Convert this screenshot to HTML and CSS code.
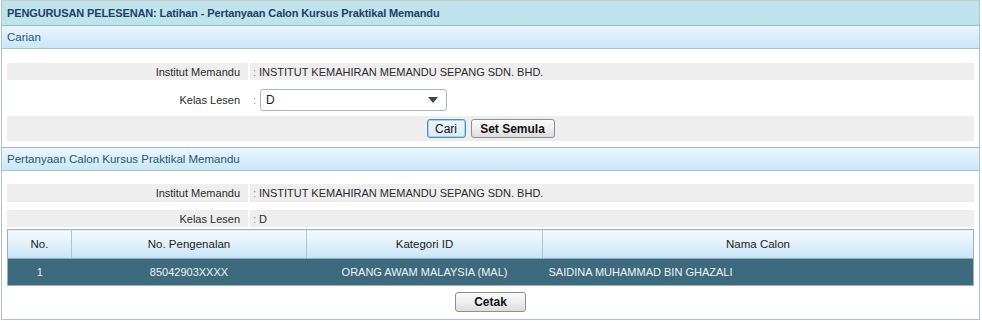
FILE: index.html
```html
<!DOCTYPE html>
<html>
<head>
<meta charset="utf-8">
<title>Pertanyaan Calon Kursus Praktikal Memandu</title>
<link rel="stylesheet" href="styles.css">
</head>
<body>
<div class="panel">
  <div class="title-bar">PENGURUSAN PELESENAN: Latihan - Pertanyaan Calon Kursus Praktikal Memandu</div>

  <div class="sec-head sec-first">Carian</div>
  <div class="sec-body body-search">
    <div class="frow frow-grey r1">
      <div class="flabel">Institut Memandu</div>
      <div class="fval"><span class="colon">:</span>INSTITUT KEMAHIRAN MEMANDU SEPANG SDN. BHD.</div>
    </div>
    <div class="frow r-select">
      <div class="flabel">Kelas Lesen</div>
      <div class="fval"><span class="colon">:</span>
        <div class="select"><span>D</span><span class="arrow"></span></div>
      </div>
    </div>
    <div class="btn-row">
      <button class="btn btn-focus">Cari</button>
      <button class="btn btn-bold">Set Semula</button>
    </div>
  </div>

  <div class="sec-head">Pertanyaan Calon Kursus Praktikal Memandu</div>
  <div class="sec-body body-result">
    <div class="frow frow-grey r2a">
      <div class="flabel">Institut Memandu</div>
      <div class="fval"><span class="colon">:</span>INSTITUT KEMAHIRAN MEMANDU SEPANG SDN. BHD.</div>
    </div>
    <div class="frow frow-grey r2b">
      <div class="flabel">Kelas Lesen</div>
      <div class="fval"><span class="colon">:</span>D</div>
    </div>
    <table class="grid">
      <thead>
        <tr>
          <th class="c-no">No.</th>
          <th class="c-ic">No. Pengenalan</th>
          <th class="c-cat">Kategori ID</th>
          <th class="c-name">Nama Calon</th>
        </tr>
      </thead>
      <tbody>
        <tr>
          <td class="center">1</td>
          <td class="center">85042903XXXX</td>
          <td class="center">ORANG AWAM MALAYSIA (MAL)</td>
          <td class="left">SAIDINA MUHAMMAD BIN GHAZALI</td>
        </tr>
      </tbody>
    </table>
    <div class="print-row">
      <button class="btn btn-bold btn-print">Cetak</button>
    </div>
  </div>
</div>
</body>
</html>
```

FILE: styles.css
```css
html, body {
  margin: 0;
  padding: 0;
  background: #ffffff;
}

body {
  font-family: "Liberation Sans", Arial, sans-serif;
  font-size: 11px;
  color: #333333;
}

.panel {
  margin-left: 1px;
  width: 979px;
  box-sizing: border-box;
  border: 1px solid #aac4d2;
  border-top-color: #c8c8c8;
  height: 320px;
}

.title-bar {
  height: 24px;
  line-height: 25px;
  background: #bee3ea;
  border-bottom: 1px solid #8ebfcc;
  padding-left: 5px;
  font-weight: bold;
  font-size: 11px;
  letter-spacing: -0.12px;
  color: #1d3f6a;
}

.sec-head {
  height: 22px;
  line-height: 22px;
  padding-left: 5px;
  font-size: 11.5px;
  color: #2a5673;
  background: linear-gradient(to bottom, #eaf6fd 0%, #c9e6f8 100%);
  border-top: 1px solid #9fbccf;
  border-bottom: 1px solid #a6c3d4;
}

.sec-first {
  border-top: none;
}

.sec-body {
  padding: 0 5px;
}

.body-search {
  padding-top: 14px;
  padding-bottom: 6px;
}

.body-result {
  padding-top: 13px;
}

.frow {
  display: grid;
  grid-template-columns: 241px 1fr;
  column-gap: 2px;
}

.frow-grey .flabel,
.frow-grey .fval {
  background: #eeeeee;
}

.flabel {
  text-align: right;
  padding-right: 8px;
  display: flex;
  align-items: center;
  justify-content: flex-end;
  color: #2b2b2b;
}

.fval {
  display: flex;
  align-items: center;
  padding-left: 3px;
  color: #2b2b2b;
}

.colon {
  color: #888888;
  margin-right: 3px;
  width: 3px;
}

.r1 { height: 17px; }
.r-select { height: 24px; margin-top: 8px; }
.r2a { height: 18px; }
.r2b { height: 17px; margin-top: 8px; }

.select {
  margin-left: 1px;
  width: 187px;
  height: 22px;
  box-sizing: border-box;
  border: 1px solid #a6b8c6;
  border-radius: 3px;
  background: #ffffff;
  display: flex;
  align-items: center;
  justify-content: space-between;
  padding: 0 8px 0 5px;
  font-size: 12px;
  color: #222222;
}

.arrow {
  width: 0;
  height: 0;
  border-left: 5px solid transparent;
  border-right: 5px solid transparent;
  border-top: 6px solid #444444;
}

.btn-row {
  margin-top: 4px;
  height: 25px;
  background: #eeeeee;
  display: flex;
  justify-content: center;
  align-items: center;
  gap: 5px;
}

.btn {
  font-family: "Liberation Sans", Arial, sans-serif;
  font-size: 12px;
  height: 19px;
  padding: 0;
  border: 1px solid #8e8e8e;
  border-radius: 3px;
  background: linear-gradient(to bottom, #fafafa 0%, #eeeeee 50%, #dcdcdc 100%);
  color: #111111;
  cursor: pointer;
}

.btn-focus {
  width: 39px;
  border-color: #4f8fb8;
  background: linear-gradient(to bottom, #eef6fb 0%, #dbeaf3 100%);
  box-shadow: inset 0 0 0 1px #a9d2ea;
}

.btn-bold {
  font-weight: bold;
  width: 84px;
}

.btn-print {
  width: 71px;
  height: 20px;
}

.grid {
  margin-top: 2px;
  width: 100%;
  border-collapse: collapse;
  border: 1px solid #96b4c5;
  table-layout: fixed;
}

.grid th {
  height: 28px;
  font-weight: normal;
  font-size: 11.5px;
  color: #222222;
  background: linear-gradient(to bottom, #f4fafe 0%, #e2f1fb 45%, #c7e4f6 100%);
  border-left: 1px solid #a9c6d6;
  border-bottom: 1px solid #8fb0c2;
  text-align: center;
  padding: 0;
}

.grid th:first-child { border-left: none; }

.c-no { width: 63px; }
.c-ic { width: 234px; }
.c-cat { width: 235px; }

.grid td {
  height: 26px;
  background: #3e6a7e;
  color: #eef3f6;
  font-size: 11px;
  padding: 0;
}

.grid td.center { text-align: center; }
.grid td.left { text-align: left; padding-left: 6px; }

.print-row {
  margin-top: 6px;
  display: flex;
  justify-content: center;
}
```
